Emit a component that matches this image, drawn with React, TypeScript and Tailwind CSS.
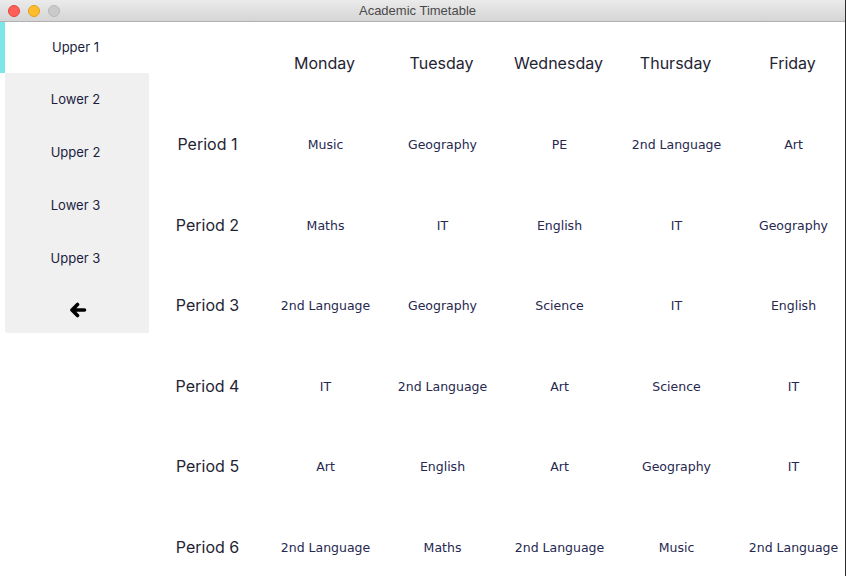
// Timetable window: title bar, class picker on the left, week grid on the right.

const days = ["Monday", "Tuesday", "Wednesday", "Thursday", "Friday"];

const periods: string[][] = [
  ["Music", "Geography", "PE", "2nd Language", "Art"],
  ["Maths", "IT", "English", "IT", "Geography"],
  ["2nd Language", "Geography", "Science", "IT", "English"],
  ["IT", "2nd Language", "Art", "Science", "IT"],
  ["Art", "English", "Art", "Geography", "IT"],
  ["2nd Language", "Maths", "2nd Language", "Music", "2nd Language"],
];

const classes = ["Lower 2", "Upper 2", "Lower 3", "Upper 3"];

function BackArrow() {
  return (
    <svg width="18" height="16" viewBox="0 0 18 16" fill="none">
      <path
        d="M8.5 2.5 L3 8 L8.5 13.5 M3.5 8 H15.5"
        stroke="#000"
        strokeWidth="3.6"
        strokeLinecap="round"
        strokeLinejoin="round"
      />
    </svg>
  );
}

function TitleBar() {
  return (
    <div className="relative flex h-[22px] shrink-0 items-center justify-center border-b border-[#b1b1b1] bg-gradient-to-b from-[#ebebeb] to-[#d5d5d5] pr-[10px]">
      <div className="absolute left-[8px] top-[5px] flex gap-[8px]">
        <span className="h-[12px] w-[12px] rounded-full border border-[#e2463f] bg-[#fe5f57]" />
        <span className="h-[12px] w-[12px] rounded-full border border-[#e1a116] bg-[#febc2e]" />
        <span className="h-[12px] w-[12px] rounded-full border border-[#b9b9b9] bg-[#cacaca]" />
      </div>
      <span className="font-['Liberation_Sans',sans-serif] text-[13px] text-[#4a4a4a]">
        Academic Timetable
      </span>
    </div>
  );
}

function Sidebar() {
  return (
    <div className="flex w-[149px] shrink-0 flex-col font-['Inter',sans-serif] text-[13px] text-[#1b1d3f]">
      <div className="flex h-[51px] items-center">
        <span className="h-full w-[5px] bg-[#7ee6e6]" />
        <span className="flex-1 pr-[3px] text-center">Upper 1</span>
      </div>
      <div className="ml-[5px] flex flex-col rounded-bl-[3px] bg-[#f0f0f0] pr-[3px]">
        {classes.map((c) => (
          <div key={c} className="flex h-[53px] items-center justify-center">
            {c}
          </div>
        ))}
        <div className="flex h-[48px] items-center justify-center pl-[5px] pt-[2px]">
          <BackArrow />
        </div>
      </div>
    </div>
  );
}

function Timetable() {
  return (
    <div className="grid grid-cols-[repeat(6,117px)] grid-rows-[82px_repeat(6,80.5px)]">
      <div />
      {days.map((d) => (
        <div
          key={d}
          className="flex items-center justify-center font-['Inter',sans-serif] text-[16px] text-[#1f2433]"
        >
          {d}
        </div>
      ))}
      {periods.map((row, i) => (
        <>
          <div
            key={`p${i}`}
            className="flex items-center justify-center font-['Inter',sans-serif] text-[16px] text-[#1f2433]"
          >
            Period {i + 1}
          </div>
          {row.map((s, j) => (
            <div
              key={`${i}-${j}`}
              className="flex items-center justify-center whitespace-nowrap pl-[2px] pt-[3px] font-['DejaVu_Sans',sans-serif] text-[12.5px] text-[#262850]"
            >
              {s}
            </div>
          ))}
        </>
      ))}
    </div>
  );
}

export default function App() {
  return (
    <div className="flex h-[576px] w-[846px] flex-col overflow-hidden border-r border-[#2e2e2e] bg-white">
      <TitleBar />
      <div className="flex flex-1 overflow-hidden">
        <Sidebar />
        <Timetable />
      </div>
    </div>
  );
}
